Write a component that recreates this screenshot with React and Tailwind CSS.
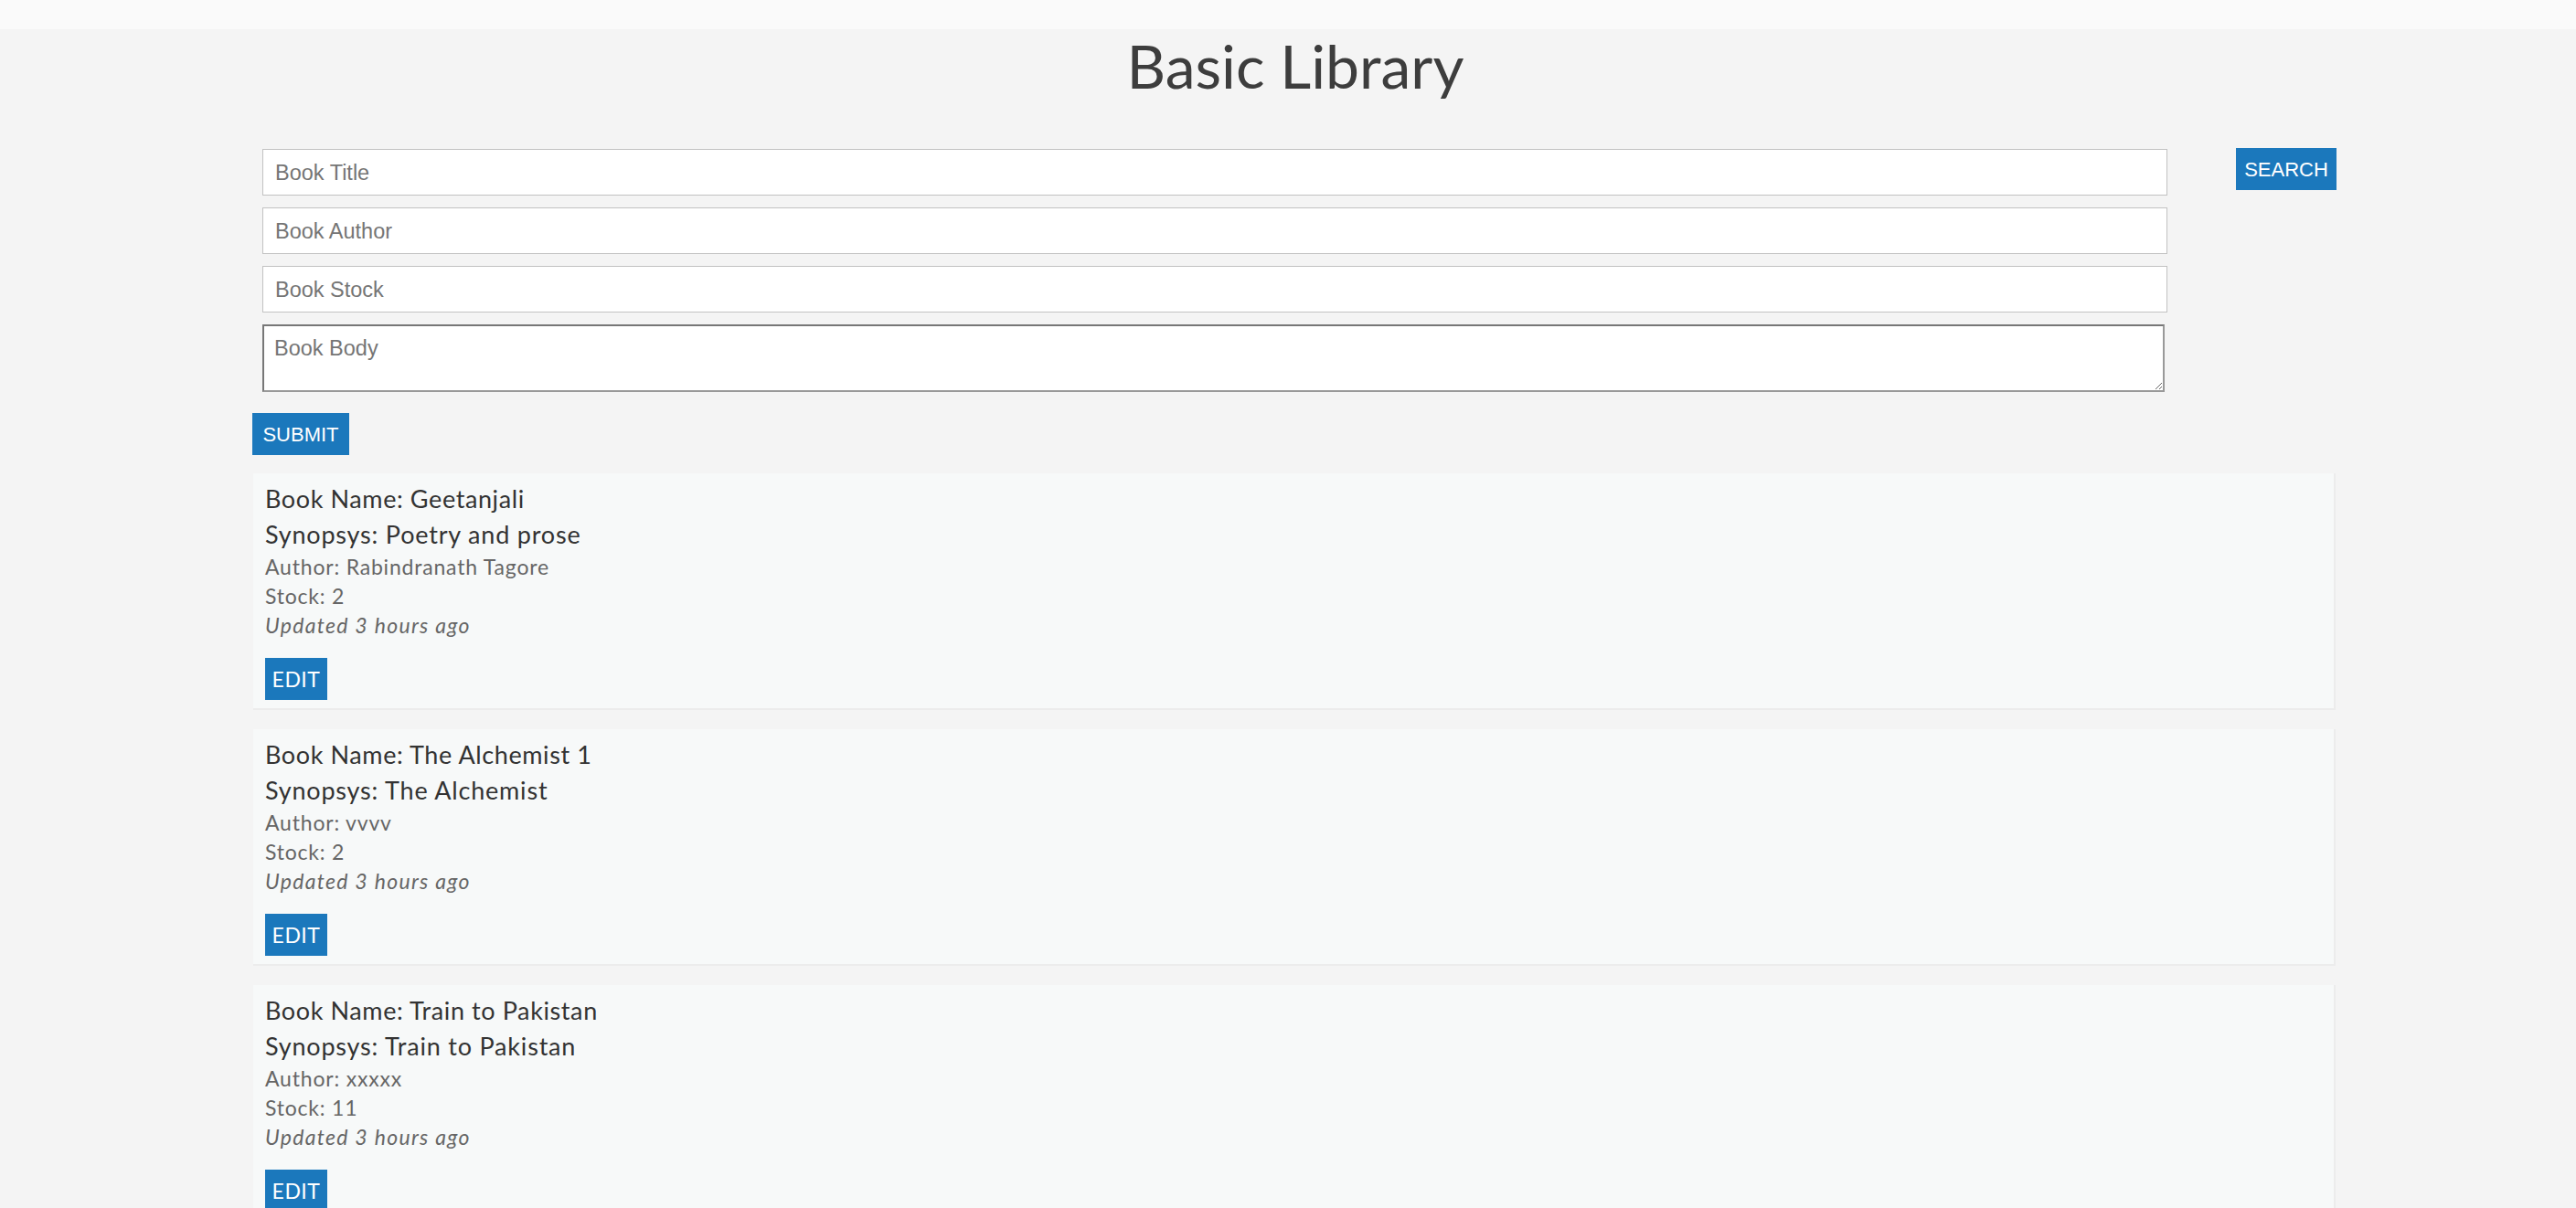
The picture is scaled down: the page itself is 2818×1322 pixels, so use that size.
import React from 'react';

const books = [
  { name: 'Geetanjali', synopsis: 'Poetry and prose', author: 'Rabindranath Tagore', stock: 2 },
  { name: 'The Alchemist 1', synopsis: 'The Alchemist', author: 'vvvv', stock: 2 },
  { name: 'Train to Pakistan', synopsis: 'Train to Pakistan', author: 'xxxxx', stock: 11 },
];

const inputClass =
  "block ml-[11px] w-[2084px] h-[51px] mb-[13px] bg-white border border-[#c2c2c2] pl-[13px] pt-[2px] text-[23.5px] text-[#333] placeholder:text-[#757575] font-['Liberation_Sans',sans-serif] outline-none";

const BookCard = ({ book }) => (
  <div className="w-[2278px] mb-[21px] bg-[#f7f9f9] border-r-2 border-b-2 border-[#ececec] pl-[13px] pt-[8px] pb-[9px]">
    <div className="text-[27px] leading-[39px] tracking-[0.6px] text-[#333]">Book Name: {book.name}</div>
    <div className="text-[27px] leading-[39px] tracking-[0.8px] text-[#333]">Synopsys: {book.synopsis}</div>
    <div className="text-[23px] leading-[32px] tracking-[0.8px] text-[#666]">Author: {book.author}</div>
    <div className="text-[23px] leading-[32px] tracking-[0.8px] text-[#666]">Stock: {book.stock}</div>
    <div className="text-[23px] leading-[32px] tracking-[1.3px] text-[#666] italic">Updated 3 hours ago</div>
    <button className="mt-[20px] w-[68px] h-[46px] bg-[#1b78bc] text-white text-[23px] tracking-[0.5px] flex items-center justify-center">
      EDIT
    </button>
  </div>
);

export default function App() {
  return (
    <div className="min-h-screen bg-[#f4f4f4] font-['Lato',sans-serif]">
      <div className="h-[32px] bg-[#fafafa]" />
      <h1 className="mt-[7px] h-[123px] text-center text-[66px] leading-[65px] text-[#3d3d3d] pl-[16px]">
        Basic Library
      </h1>

      <div className="ml-[276px] w-[2280px]">
        {/* form */}
        <div className="flex items-start justify-between">
          <div className="flex flex-col items-start pt-[1px]">
            <input className={inputClass} placeholder="Book Title" />
            <input className={inputClass} placeholder="Book Author" />
            <input className={inputClass} placeholder="Book Stock" />
            <textarea
              className="block ml-[11px] w-[2081px] h-[74px] bg-white border-2 border-t-[#777] border-l-[#777] border-r-[#999] border-b-[#999] pl-[11px] pt-[7px] text-[23.5px] text-[#333] placeholder:text-[#757575] font-['Liberation_Sans',sans-serif] outline-none"
              placeholder="Book Body"
            />
            <button className="mt-[23px] w-[106px] h-[46px] bg-[#1b78bc] text-white text-[22px] font-['Liberation_Sans',sans-serif] flex items-center justify-center">
              SUBMIT
            </button>
          </div>
          <button className="w-[110px] h-[46px] bg-[#1b78bc] text-white text-[22px] font-['Liberation_Sans',sans-serif] flex items-center justify-center">
            SEARCH
          </button>
        </div>

        {/* book list */}
        <div className="mt-[20px] ml-[1px]">
          {books.map((book) => (
            <BookCard key={book.name} book={book} />
          ))}
        </div>
      </div>
    </div>
  );
}
